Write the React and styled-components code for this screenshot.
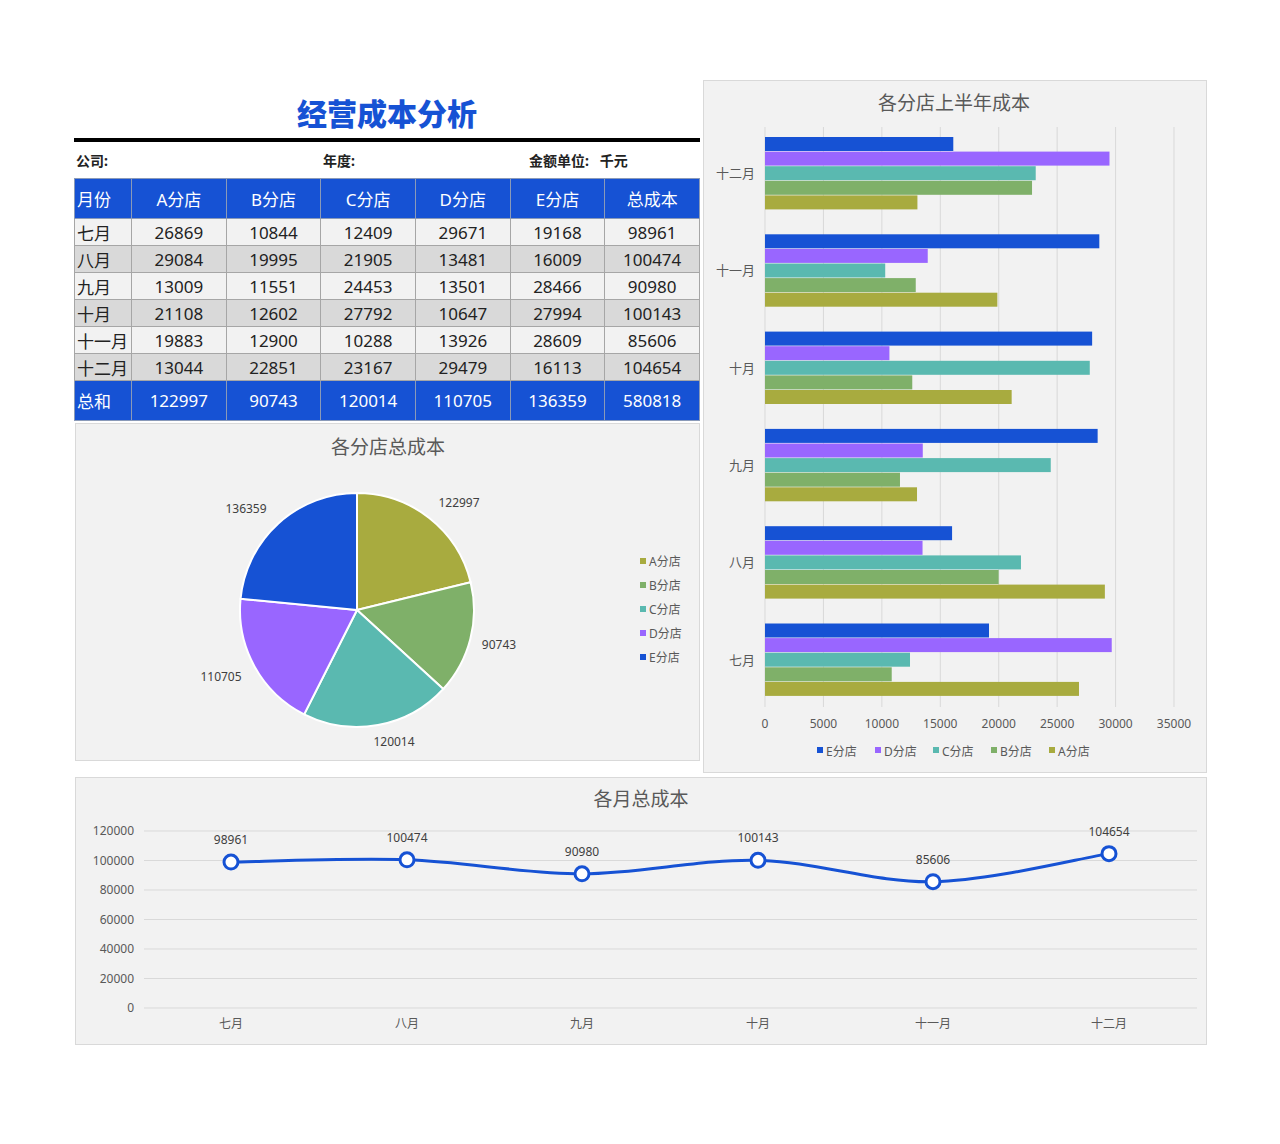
import React from "react";
import styled, { createGlobalStyle } from "styled-components";

const G = createGlobalStyle`
  body{margin:0;background:#fff;font-family:"Noto Sans","Noto Sans CJK SC",sans-serif;}
`;
const C = { A: "#a8ab3f", B: "#7fb069", C: "#5ab9b0", D: "#9966ff", E: "#1652d4" };
const months = ["七月", "八月", "九月", "十月", "十一月", "十二月"];
const rows = [
  [26869, 10844, 12409, 29671, 19168, 98961],
  [29084, 19995, 21905, 13481, 16009, 100474],
  [13009, 11551, 24453, 13501, 28466, 90980],
  [21108, 12602, 27792, 10647, 27994, 100143],
  [19883, 12900, 10288, 13926, 28609, 85606],
  [13044, 22851, 23167, 29479, 16113, 104654],
];
const totals = [122997, 90743, 120014, 110705, 136359, 580818];
const font = `"Noto Sans","Noto Sans CJK SC",sans-serif`;

const Page = styled.div`
  width: 1134px; margin: 80px 0 0 74px;
  display: grid; grid-template-columns: 626px 504px; column-gap: 3px; row-gap: 4px;
`;
const Left = styled.div`display:flex;flex-direction:column;`;
const Title = styled.h1`
  margin:0;height:62px;display:flex;align-items:center;justify-content:center;
  font-size:30px;font-weight:900;color:#1652d4;padding-top:6px;box-sizing:border-box;
  border-bottom:4px solid #000;
`;
const Info = styled.div`
  height:36px;display:grid;grid-template-columns:247px 206px 1fr;align-items:center;
  font-size:14px;font-weight:700;color:#222;padding-left:2px;
`;
const Table = styled.table`
  border-collapse:collapse;width:626px;table-layout:fixed;font-size:17px;
`;
const Th = styled.td`
  background:#1652d4;color:#fff;height:39px;border:1px solid #8a9ab8;
  text-align:${p => (p.$left ? "left" : "center")};padding:0 2px;
`;
const Td = styled.td`
  background:${p => (p.$alt ? "#d9d9d9" : "#f2f2f2")};color:#222;height:26px;
  border:1px solid #a6a6a6;text-align:${p => (p.$left ? "left" : "center")};padding:0 2px;
`;
const Panel = styled.div`
  background:#f2f2f2;border:1px solid #d9d9d9;box-sizing:border-box;
  ${p => p.$span && "grid-column: 1 / span 2; margin-left:1px;"}
`;
const Svg = styled.svg`display:block;font-family:${font};`;

function Pie() {
  const vals = totals.slice(0, 5), keys = ["A", "B", "C", "D", "E"];
  const sum = vals.reduce((a, b) => a + b, 0);
  const cx = 281, cy = 186, r = 117;
  let a = -Math.PI / 2;
  const labels = [[383, 83], [423, 225], [318, 322], [145, 257], [170, 89]];
  return (
    <Svg width="624" height="336">
      <text x="312" y="30" textAnchor="middle" fontSize="19" fill="#595959">各分店总成本</text>
      {vals.map((v, i) => {
        const b = a + (v / sum) * Math.PI * 2;
        const d = `M${cx},${cy} L${cx + r * Math.cos(a)},${cy + r * Math.sin(a)} A${r},${r} 0 0 1 ${cx + r * Math.cos(b)},${cy + r * Math.sin(b)} Z`;
        a = b;
        return <path key={i} d={d} fill={C[keys[i]]} stroke="#fff" strokeWidth="2" />;
      })}
      {vals.map((v, i) => (
        <text key={i} x={labels[i][0]} y={labels[i][1]} textAnchor="middle" fontSize="12" fill="#404040">{v}</text>
      ))}
      {keys.map((k, i) => (
        <g key={k}>
          <rect x="564" y={134 + i * 24} width="6" height="6" fill={C[k]} />
          <text x="573" y={142 + i * 24} fontSize="12" fill="#595959">{k}分店</text>
        </g>
      ))}
    </Svg>
  );
}

function Bars() {
  const x0 = 61, s = 409 / 35000, order = ["E", "D", "C", "B", "A"], idx = { A: 0, B: 1, C: 2, D: 3, E: 4 };
  const groups = [5, 4, 3, 2, 1, 0];
  return (
    <Svg width="502" height="691">
      <text x="250" y="29" textAnchor="middle" fontSize="19" fill="#595959">各分店上半年成本</text>
      {[0, 1, 2, 3, 4, 5, 6, 7].map(i => (
        <g key={i}>
          <line x1={x0 + i * 5000 * s} x2={x0 + i * 5000 * s} y1="46" y2="626" stroke="#d9d9d9" />
          <text x={x0 + i * 5000 * s} y="647" textAnchor="middle" fontSize="12" fill="#595959">{i * 5000}</text>
        </g>
      ))}
      {groups.map((m, g) => {
        const top = 56 + g * 97.3;
        return (
          <g key={m}>
            <text x="51" y={top + 41} textAnchor="end" fontSize="13" fill="#595959">{months[m]}</text>
            {order.map((k, j) => (
              <rect key={k} x={x0} y={top + j * 14.6} width={rows[m][idx[k]] * s} height="14" fill={C[k]} />
            ))}
          </g>
        );
      })}
      {order.map((k, i) => (
        <g key={k}>
          <rect x={113 + i * 58} y="666" width="6" height="6" fill={C[k]} />
          <text x={122 + i * 58} y="675" fontSize="12" fill="#595959">{k}分店</text>
        </g>
      ))}
    </Svg>
  );
}

function Line() {
  const xs = [155, 331, 506, 682, 857, 1033];
  const y = v => 230 - (v / 120000) * 177;
  const pts = rows.map((r, i) => [xs[i], y(r[5])]);
  let d = `M${pts[0][0]},${pts[0][1]}`;
  for (let i = 0; i < pts.length - 1; i++) {
    const p0 = pts[i - 1] || pts[i], p1 = pts[i], p2 = pts[i + 1], p3 = pts[i + 2] || p2;
    const c1 = [p1[0] + (p2[0] - p0[0]) / 6, p1[1] + (p2[1] - p0[1]) / 6];
    const c2 = [p2[0] - (p3[0] - p1[0]) / 6, p2[1] - (p3[1] - p1[1]) / 6];
    d += ` C${c1[0]},${c1[1]} ${c2[0]},${c2[1]} ${p2[0]},${p2[1]}`;
  }
  return (
    <Svg width="1130" height="266">
      <text x="565" y="28" textAnchor="middle" fontSize="19" fill="#595959">各月总成本</text>
      {[0, 1, 2, 3, 4, 5, 6].map(i => (
        <g key={i}>
          <line x1="68" x2="1121" y1={y(i * 20000)} y2={y(i * 20000)} stroke="#d9d9d9" />
          <text x="58" y={y(i * 20000) + 4} textAnchor="end" fontSize="12" fill="#595959">{i * 20000}</text>
        </g>
      ))}
      <path d={d} fill="none" stroke="#1652d4" strokeWidth="3" />
      {pts.map((p, i) => (
        <g key={i}>
          <circle cx={p[0]} cy={p[1]} r="7" fill="#fff" stroke="#1652d4" strokeWidth="3" />
          <text x={p[0]} y={p[1] - 18} textAnchor="middle" fontSize="12" fill="#404040">{rows[i][5]}</text>
          <text x={p[0]} y="250" textAnchor="middle" fontSize="12" fill="#595959">{months[i]}</text>
        </g>
      ))}
    </Svg>
  );
}

export default function App() {
  return (
    <>
      <G />
      <Page>
        <Left>
          <Title>经营成本分析</Title>
          <Info><span>公司:</span><span>年度:</span><span>金额单位:&nbsp;&nbsp;&nbsp;千元</span></Info>
          <Table>
            <colgroup><col style={{ width: 57 }} />{[0, 1, 2, 3, 4, 5].map(i => <col key={i} />)}</colgroup>
            <tbody>
              <tr>{["月份", "A分店", "B分店", "C分店", "D分店", "E分店", "总成本"].map((h, i) => <Th key={h} $left={i === 0}>{h}</Th>)}</tr>
              {rows.map((r, i) => (
                <tr key={i}>
                  <Td $alt={i % 2 === 1} $left>{months[i]}</Td>
                  {r.map((v, j) => <Td key={j} $alt={i % 2 === 1}>{v}</Td>)}
                </tr>
              ))}
              <tr><Th $left>总和</Th>{totals.map((v, j) => <Th key={j}>{v}</Th>)}</tr>
            </tbody>
          </Table>
          <Panel style={{ marginTop: 2, marginLeft: 1 }}><Pie /></Panel>
        </Left>
        <Panel><Bars /></Panel>
        <Panel $span><Line /></Panel>
      </Page>
    </>
  );
}
